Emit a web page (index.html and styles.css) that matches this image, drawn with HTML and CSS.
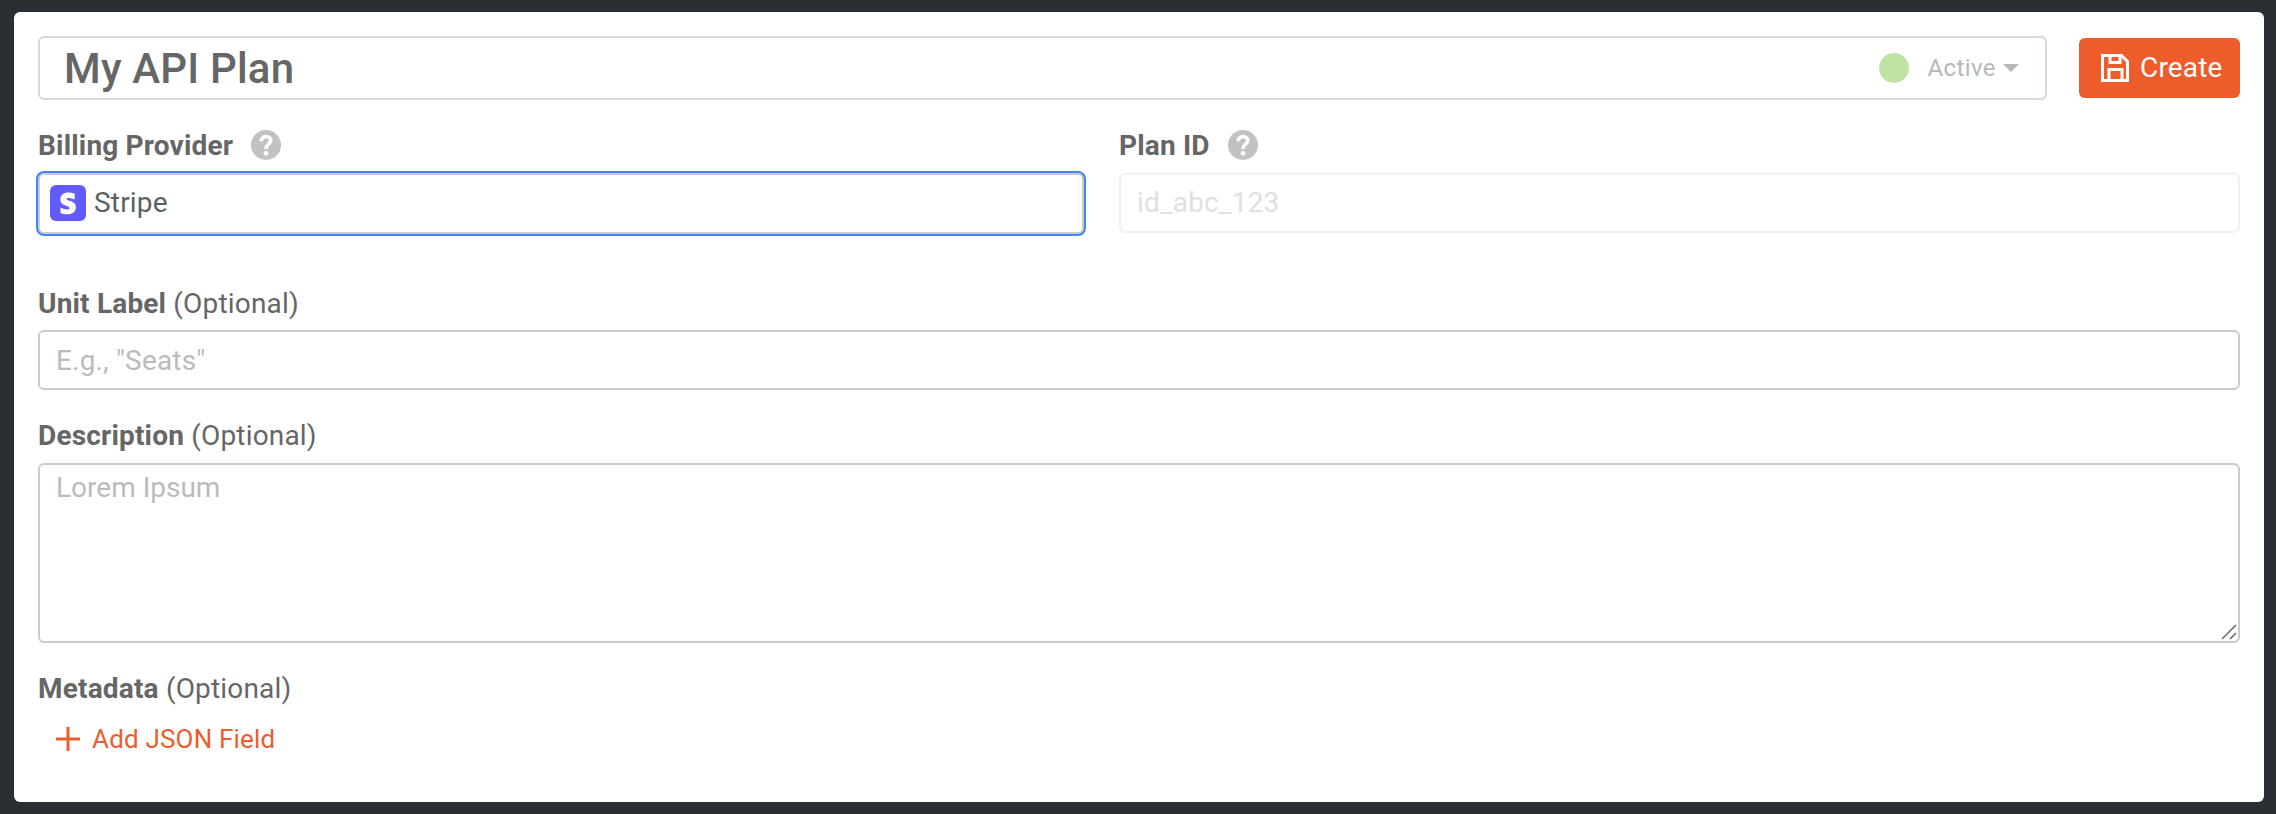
FILE: index.html
```html
<!DOCTYPE html>
<html lang="en">
<head>
    <meta charset="UTF-8">
    <meta name="viewport" content="width=device-width, initial-scale=1.0">
    <title>My API Plan</title>
    <link rel="stylesheet" href="styles.css">
</head>
<body>
    <form class="card">
        <div class="header">
            <div class="title-box">
                <input type="text" class="title-input" value="My API Plan" aria-label="Plan name">
                <div class="status">
                    <span class="dot"></span>
                    <span class="status-text">Active</span>
                    <span class="caret"></span>
                </div>
            </div>
            <button type="button" class="create">
                <svg width="28" height="28" viewBox="0 0 28 28" fill="none" stroke="#fff" stroke-width="3">
                    <path d="M1.5 1.5H20.5L26.5 7.5V26.5H1.5Z"/>
                    <path d="M9 1V8.500H19V1"/>
                    <path d="M8 26V15.500H21V26"/>
                </svg>
                <span>Create</span>
            </button>
        </div>

        <div class="columns">
            <div class="field provider">
                <div class="label">
                    <span>Billing Provider</span>
                    <svg class="help" width="30" height="30" viewBox="0 0 30 30">
                        <circle cx="15" cy="15" r="15" fill="#c2c2c2"/>
                        <path d="M10.300 11.300C10.300 8.200 12.300 6.600 15 6.600C17.900 6.600 19.800 8.200 19.800 10.600C19.800 14 15 14.100 15 19" fill="none" stroke="#fff" stroke-width="3.600"/>
                        <circle cx="15" cy="23.300" r="2.400" fill="#fff"/>
                    </svg>
                </div>
                <div class="select">
                    <svg width="36" height="36" viewBox="0 0 36 36">
                        <rect width="36" height="36" rx="6" fill="#635bff"/>
                        <path d="M16.600 14.200c0-.9.800-1.300 2-1.300 1.900 0 4.200.6 6.100 1.600V8.700c-2-.8-4.100-1.200-6.100-1.200-5 0-8.300 2.600-8.300 7 0 6.800 9.300 5.700 9.300 8.600 0 1.100-.9 1.500-2.300 1.500-2 0-4.700-.9-6.800-2v5.300c2.300 1 4.700 1.400 6.800 1.400 5.100 0 8.600-2.500 8.600-7 0-7.300-9.300-6-9.300-8.100z" fill="#fff"/>
                    </svg>
                    <span>Stripe</span>
                </div>
            </div>
            <div class="field plan">
                <div class="label">
                    <label for="planId">Plan ID</label>
                    <svg class="help" width="30" height="30" viewBox="0 0 30 30">
                        <circle cx="15" cy="15" r="15" fill="#c2c2c2"/>
                        <path d="M10.300 11.300C10.300 8.200 12.300 6.600 15 6.600C17.900 6.600 19.800 8.200 19.800 10.600C19.800 14 15 14.100 15 19" fill="none" stroke="#fff" stroke-width="3.600"/>
                        <circle cx="15" cy="23.300" r="2.400" fill="#fff"/>
                    </svg>
                </div>
                <input type="text" id="planId" class="input" placeholder="id_abc_123" disabled>
            </div>
        </div>

        <div class="field unit">
            <label class="label" for="unit">Unit Label <span class="optional">(Optional)</span></label>
            <input type="text" id="unit" class="input" placeholder='E.g., "Seats"'>
        </div>

        <div class="field description">
            <label class="label" for="description">Description <span class="optional">(Optional)</span></label>
            <div class="textarea-wrap">
                <textarea id="description" class="input textarea" placeholder="Lorem Ipsum"></textarea>
                <svg class="grip" width="16" height="16" viewBox="0 0 16 16" stroke="#666" stroke-width="1.500">
                    <path d="M1 15L15 1M9 15L15 9"/>
                </svg>
            </div>
        </div>

        <div class="field metadata">
            <div class="label">Metadata <span class="optional">(Optional)</span></div>
            <button type="button" class="add">
                <svg width="24" height="24" viewBox="0 0 24 24" stroke="#ed5c2b" stroke-width="3">
                    <path d="M12 0V24M0 12H24"/>
                </svg>
                <span>Add JSON Field</span>
            </button>
        </div>
    </form>
</body>
</html>
```
FILE: styles.css
```css
* {
    box-sizing: border-box;
}
body {
    margin: 0;
    padding: 12px 12px 12px 14px;
    height: 814px;
    background-color: #2a2f33;
    font-family: Roboto, sans-serif;
    font-size: 28px;
    letter-spacing: 0.18px;
    color: #666;
}
input, textarea, button {
    font-family: inherit;
    font-size: inherit;
    letter-spacing: inherit;
    color: inherit;
    margin: 0;
}
.card {
    height: 790px;
    padding: 24px;
    background: #fff;
    border-radius: 6px;
}
.header {
    display: flex;
    align-items: center;
    gap: 32px;
}
.title-box {
    flex: 1;
    display: flex;
    align-items: center;
    height: 64px;
    padding: 0 26px 0 24px;
    border: 2px solid #d2dadd;
    border-radius: 6px;
}
.title-input {
    flex: 1;
    height: 60px;
    padding: 0;
    border: none;
    outline: none;
    background: none;
    font-size: 42px;
    font-weight: 500;
}
.status {
    display: flex;
    align-items: center;
    color: #b5b9bc;
    font-size: 24px;
    letter-spacing: 0.4px;
}
.dot {
    width: 30px;
    height: 30px;
    margin-right: 18px;
    border-radius: 50%;
    background: #bfe3a5;
}
.caret {
    margin-left: 7px;
    border: 8px solid transparent;
    border-top-color: #b5b9bc;
    border-bottom: none;
}
.create {
    display: flex;
    align-items: center;
    gap: 11px;
    width: 161px;
    height: 60px;
    padding: 0 0 1px 22px;
    border: none;
    border-radius: 6px;
    background: #ed5c2b;
    color: #fff;
    cursor: pointer;
}
.columns {
    display: flex;
    gap: 35px;
    margin-top: 28px;
}
.provider {
    width: 1046px;
}
.plan {
    flex: 1;
}
.label {
    display: flex;
    align-items: center;
    height: 34px;
    font-weight: 700;
    white-space: pre;
}
.help {
    margin-left: 18px;
}
.optional {
    font-weight: 400;
}
.input, .select {
    display: block;
    width: 100%;
    height: 60px;
    margin-top: 11px;
    padding: 0 16px 1px;
    border: 2px solid #c8cdcc;
    border-radius: 6px;
    background: #fff;
    outline: none;
}
.input::placeholder {
    color: #bbb;
    opacity: 1;
}
.input:disabled {
    border-color: #f0f0f0;
}
.input:disabled::placeholder {
    color: #e0e0e0;
}
.select {
    display: flex;
    align-items: center;
    gap: 8px;
    height: 61px;
    padding: 0 10px 2px;
    color: #5b6263;
    box-shadow: 0 0 0 2px #4284f5;
}
.unit {
    margin-top: 52px;
}
.unit .input {
    margin-top: 10px;
    padding-bottom: 0;
}
.description {
    margin-top: 28px;
}
.textarea-wrap {
    position: relative;
}
.textarea {
    height: 180px;
    padding: 6px 16px;
    letter-spacing: 0;
    resize: none;
}
.grip {
    position: absolute;
    right: 3px;
    bottom: 3px;
}
.metadata {
    margin-top: 28px;
}
.add {
    display: flex;
    align-items: center;
    gap: 12px;
    margin-top: 19px;
    padding: 0 18px;
    border: none;
    background: none;
    color: #ed5c2b;
    font-size: 26px;
    cursor: pointer;
}
```
